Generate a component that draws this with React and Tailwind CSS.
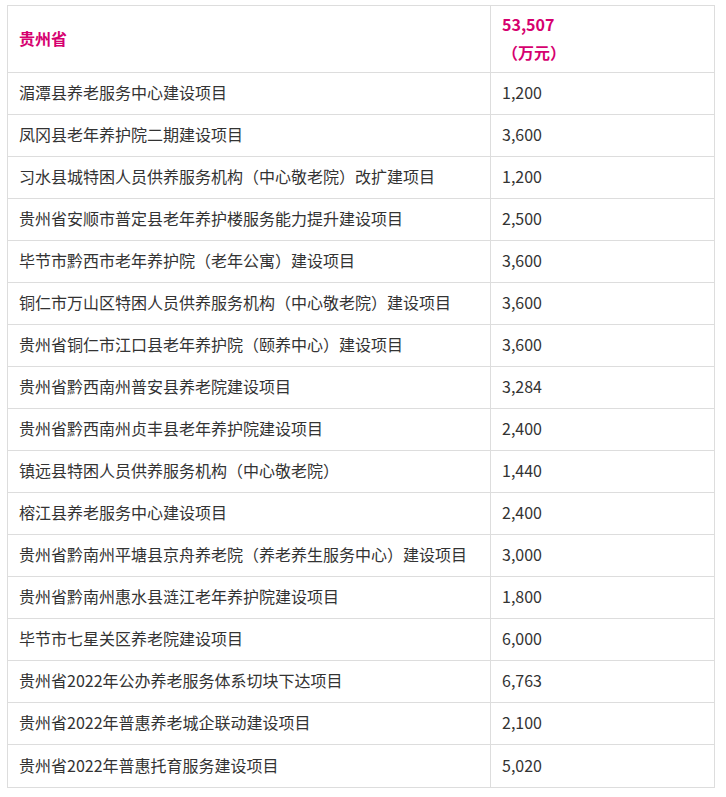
import React from 'react';

const rows = [
    ['湄潭县养老服务中心建设项目', '1,200'],
    ['凤冈县老年养护院二期建设项目', '3,600'],
    ['习水县城特困人员供养服务机构（中心敬老院）改扩建项目', '1,200'],
    ['贵州省安顺市普定县老年养护楼服务能力提升建设项目', '2,500'],
    ['毕节市黔西市老年养护院（老年公寓）建设项目', '3,600'],
    ['铜仁市万山区特困人员供养服务机构（中心敬老院）建设项目', '3,600'],
    ['贵州省铜仁市江口县老年养护院（颐养中心）建设项目', '3,600'],
    ['贵州省黔西南州普安县养老院建设项目', '3,284'],
    ['贵州省黔西南州贞丰县老年养护院建设项目', '2,400'],
    ['镇远县特困人员供养服务机构（中心敬老院）', '1,440'],
    ['榕江县养老服务中心建设项目', '2,400'],
    ['贵州省黔南州平塘县京舟养老院（养老养生服务中心）建设项目', '3,000'],
    ['贵州省黔南州惠水县涟江老年养护院建设项目', '1,800'],
    ['毕节市七星关区养老院建设项目', '6,000'],
    ['贵州省2022年公办养老服务体系切块下达项目', '6,763'],
    ['贵州省2022年普惠养老城企联动建设项目', '2,100'],
    ['贵州省2022年普惠托育服务建设项目', '5,020'],
];

export default function App() {
    return (
        <div
            className="bg-white min-h-[797px] pt-[5px] pl-[7px] text-[16px] text-[#333333]"
            style={{ fontFamily: '"Noto Sans CJK SC", "Microsoft YaHei", sans-serif' }}
        >
            <div className="w-[708px] border border-[#dddddd]">
                <div className="flex h-[67px] border-b border-[#dddddd]">
                    <div className="w-[483px] border-r border-[#dddddd] px-[11px] pb-[2px] flex items-center font-bold text-[#d6006f]">
                        贵州省
                    </div>
                    <div className="flex-1 px-[11px] pb-[2px] flex flex-col justify-center leading-[28px] font-bold text-[#d6006f]">
                        <span>53,507</span>
                        <span>（万元）</span>
                    </div>
                </div>
                {rows.map(([name, amount], i) => (
                    <div
                        key={i}
                        className={`flex h-[42px] ${i < rows.length - 1 ? 'border-b border-[#dddddd]' : 'h-[41px]'}`}
                    >
                        <div className="w-[483px] border-r border-[#dddddd] px-[11px] pb-[3px] flex items-center">
                            {name}
                        </div>
                        <div className="flex-1 px-[11px] pb-[3px] flex items-center">{amount}</div>
                    </div>
                ))}
            </div>
        </div>
    );
}
